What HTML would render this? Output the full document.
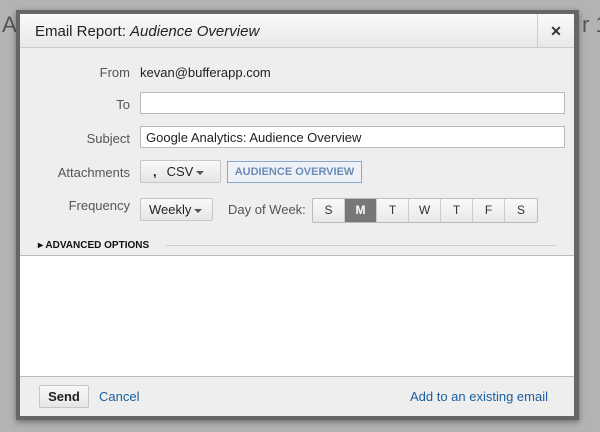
<!DOCTYPE html>
<html><head><style>
*{box-sizing:border-box;margin:0;padding:0}
body{width:600px;height:432px;background:#b3b3b3;font-family:"Liberation Sans",Arial,sans-serif;position:relative;overflow:hidden}
.bgtxt{position:absolute;color:#555;font-size:22px;white-space:nowrap}
#dlg{position:absolute;left:16px;top:10px;width:563px;height:410px;border:4px solid #666;border-right-width:5px;background:#eee;box-shadow:0 2px 6px rgba(0,0,0,.4)}
.title{height:34px;background:linear-gradient(#fafafa,#e8e8e8);border-bottom:1px solid #ccc;position:relative}
.title span{position:absolute;left:15px;top:9px;font-size:15px;color:#222}
.close{position:absolute;right:0;top:0;width:37px;height:34px;border-left:1px solid #ccc;text-align:center;font-size:14px;line-height:34px;color:#333;font-weight:bold}
.lbl{position:absolute;width:110px;text-align:right;font-size:13px;color:#555}
.inp{position:absolute;left:120px;width:425px;height:22px;background:#fff;border:1px solid #bbb;font-size:13px;padding:3px 5px;color:#222}
.btn{position:absolute;height:23px;border:1px solid #c6c6c6;border-radius:2px;background:linear-gradient(#f8f8f8,#e6e6e6);font-size:13px;color:#222;line-height:21px;padding:0 8px}
.car{display:inline-block;width:0;height:0;border-left:4px solid transparent;border-right:4px solid transparent;border-top:4px solid #555;vertical-align:middle;margin-left:3px}
.days{position:absolute;left:292px;top:184px;display:flex;border:1px solid #bbb;border-radius:2px;overflow:hidden}
.days div{width:32px;height:23px;border-right:1px solid #ccc;background:linear-gradient(#fafafa,#e8e8e8);font-size:12px;text-align:center;line-height:22px;color:#333}
.days div:last-child{border-right:0}
.days .on{background:#777;color:#fff;font-weight:bold}
</style></head><body>
<div class="bgtxt" style="left:2px;top:12px">A</div>
<div class="bgtxt" style="left:582px;top:12px">r 1</div>
<div id="dlg">
<div class="title"><span>Email Report: <i>Audience Overview</i></span><div class="close">✕</div></div>
<div class="lbl" style="left:0;top:51px">From</div>
<div style="position:absolute;left:120px;top:51px;font-size:13px;color:#222">kevan@bufferapp.com</div>
<div class="lbl" style="left:0;top:83px">To</div>
<div class="inp" style="top:78px"></div>
<div class="lbl" style="left:0;top:117px">Subject</div>
<div class="inp" style="top:112px">Google Analytics: Audience Overview</div>
<div class="lbl" style="left:0;top:151px">Attachments</div>
<div class="btn" style="left:120px;top:146px;width:81px"><b style="margin:0 10px 0 4px">,</b>CSV<span class="car"></span></div>
<div style="position:absolute;left:207px;top:147px;width:135px;height:22px;border:1px solid #8aa8cc;background:#eef2f7;color:#6b8cb8;font-size:11px;font-weight:bold;text-align:center;line-height:20px">AUDIENCE OVERVIEW</div>
<div class="lbl" style="left:0;top:184px">Frequency</div>
<div class="btn" style="left:120px;top:184px;width:73px">Weekly<span class="car"></span></div>
<div style="position:absolute;left:208px;top:188px;font-size:13px;color:#555">Day of Week:</div>
<div class="days"><div>S</div><div class="on">M</div><div>T</div><div>W</div><div>T</div><div>F</div><div>S</div></div>
<div style="position:absolute;left:18px;top:226px;font-size:10px;font-weight:bold;color:#111">▸ ADVANCED OPTIONS</div>
<div style="position:absolute;left:146px;top:231px;width:390px;border-top:1px solid #ccc"></div>
<div style="position:absolute;left:0;top:241px;width:100%;height:122px;background:#fff;border-top:1px solid #bbb;border-bottom:1px solid #bbb"></div>
<div class="btn" style="left:19px;top:371px;width:50px;font-weight:bold;text-align:center;padding:0">Send</div>
<div style="position:absolute;left:79px;top:375px;font-size:13px;color:#1a5e9e">Cancel</div>
<div style="position:absolute;right:26px;top:375px;font-size:13px;color:#1a5e9e">Add to an existing email</div>
</div>
</body></html>
